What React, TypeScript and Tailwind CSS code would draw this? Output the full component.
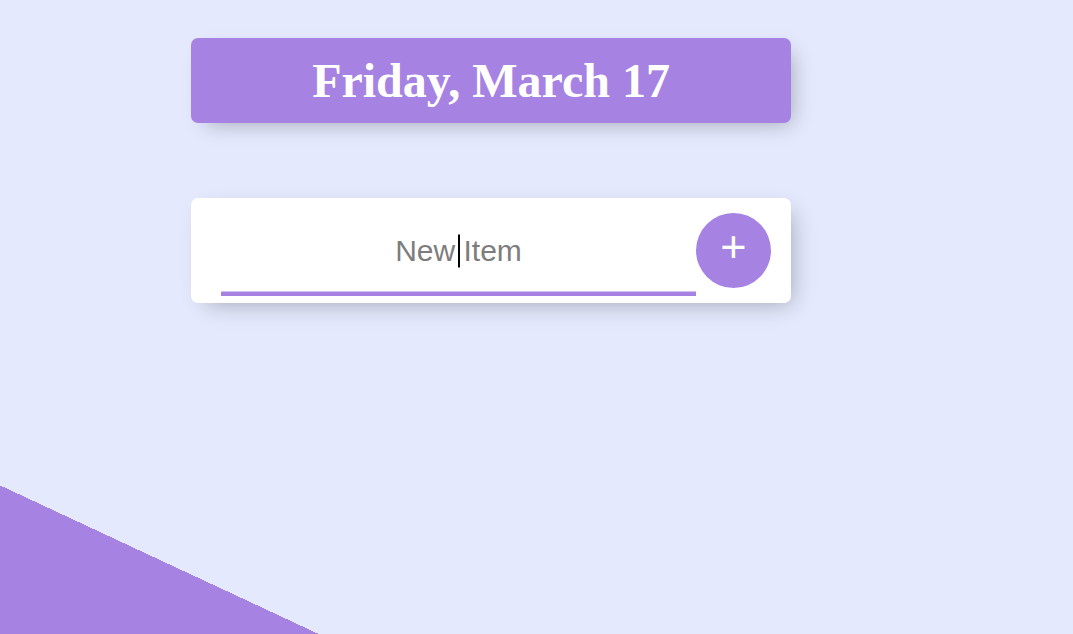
import { useState } from "react";

export default function App() {
  const [item, setItem] = useState("");

  return (
    <div className="min-h-screen w-full bg-[#E4E9FD] bg-[linear-gradient(25deg,#A683E3_13.1%,#E4E9FD_13.1%)] font-['Liberation_Sans',Arial,sans-serif]">
      <div className="flex flex-col items-start pl-[191px] pt-[38px]">
        {/* Heading */}
        <div className="w-[600px] h-[85px] flex items-center justify-center rounded-[7px] bg-[#A683E3] shadow-[7.5px_7.5px_22.5px_-7.5px_rgba(0,0,0,0.3)]">
          <h1 className="text-white text-[48px] font-bold font-['Liberation_Serif','Times_New_Roman',serif] leading-normal">
            Friday, March 17
          </h1>
        </div>

        {/* New item form */}
        <form
          onSubmit={(e) => {
            e.preventDefault();
            setItem("");
          }}
          className="mt-[75px] w-[600px] h-[105px] flex items-center pl-[30px] rounded-[7px] bg-white shadow-[7.5px_7.5px_22.5px_-7.5px_rgba(0,0,0,0.3)]"
        >
          <div className="relative w-[475px] h-[90px]">
            <input
              type="text"
              value={item}
              onChange={(e) => setItem(e.target.value)}
              placeholder="New Item"
              className="w-full h-full text-center text-[30px] bg-transparent outline-none placeholder:text-[#7d7d7d] shadow-[inset_0_-4.5px_0_0_#a683e3]"
            />
            {item === "" && (
              <span className="pointer-events-none absolute left-[237px] top-1/2 -translate-y-1/2 w-[2px] h-[33px] bg-black" />
            )}
          </div>
          <button
            type="submit"
            className="w-[75px] h-[75px] rounded-full bg-[#A683E3] text-white text-[45px] leading-none pb-[9px] flex items-center justify-center"
          >
            +
          </button>
        </form>
      </div>
    </div>
  );
}
